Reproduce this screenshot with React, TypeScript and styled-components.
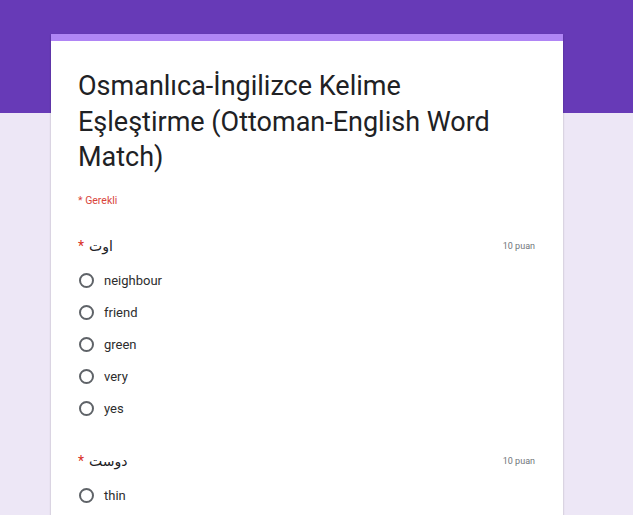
import React from "react";
import styled, { createGlobalStyle } from "styled-components";

const Global = createGlobalStyle`
  html, body { margin: 0; padding: 0; }
  body {
    font-family: Roboto, "Noto Sans", Arial, sans-serif;
    background: linear-gradient(#673ab7 0, #673ab7 113px, #ede7f6 113px) no-repeat;
    background-color: #ede7f6;
    min-height: 515px;
    overflow: hidden;
  }
`;

const Page = styled.div`
  padding: 34px 0 0 51px;
  height: 481px;
  overflow: hidden;
`;

const Card = styled.div`
  width: 512px;
  background: #fff;
  border-top: 7px solid #b085f5;
  box-shadow: 0 1px 2px rgba(0,0,0,0.25);
  padding: 28px 27px 40px 27px;
  box-sizing: border-box;
`;

const Title = styled.h1`
  margin: 0;
  font-family: Roboto, Arial, sans-serif;
  font-weight: 400;
  font-size: 27px;
  line-height: 35.5px;
  color: #202124;
  max-width: 440px;
`;

const Required = styled.div`
  margin-top: 18px;
  font-size: 10.5px;
  color: #d9453b;
  line-height: 14px;
`;

const Question = styled.section`
  margin-top: 28px;
  & + & { margin-top: 26px; }
`;

const QHeader = styled.div`
  display: flex;
  justify-content: space-between;
  align-items: center;
  height: 20px;
`;

const QTitle = styled.div`
  display: flex;
  align-items: center;
  gap: 5px;
  font-size: 14px;
  color: #202124;
  font-family: "DejaVu Sans", "Noto Sans", Arial, sans-serif;
`;

const Star = styled.span`
  color: #d93025;
  font-size: 14px;
  font-family: Roboto, Arial, sans-serif;
`;

const Points = styled.span`
  font-size: 9px;
  color: #70757a;
  padding-right: 1px;
`;

const Options = styled.div`
  display: flex;
  flex-direction: column;
  margin-top: 9px;
`;

const Option = styled.label`
  display: flex;
  align-items: center;
  height: 32px;
  gap: 10px;
  font-size: 13px;
  color: #2d2d2d;
  padding-left: 1px;
`;

const Radio = styled.span`
  width: 15px;
  height: 15px;
  box-sizing: border-box;
  border: 2px solid #5f6368;
  border-radius: 50%;
  flex: none;
`;

const questions = [
  { title: "اوت", options: ["neighbour", "friend", "green", "very", "yes"] },
  { title: "دوست", options: ["thin"] },
];

export default function App() {
  return (
    <>
      <Global />
      <Page>
        <Card>
          <Title>Osmanlıca-İngilizce Kelime Eşleştirme (Ottoman-English Word Match)</Title>
          <Required>* Gerekli</Required>
          {questions.map((q) => (
            <Question key={q.title}>
              <QHeader>
                <QTitle>
                  <Star>*</Star>
                  <span dir="rtl">{q.title}</span>
                </QTitle>
                <Points>10 puan</Points>
              </QHeader>
              <Options>
                {q.options.map((o) => (
                  <Option key={o}>
                    <Radio />
                    {o}
                  </Option>
                ))}
              </Options>
            </Question>
          ))}
        </Card>
      </Page>
    </>
  );
}
